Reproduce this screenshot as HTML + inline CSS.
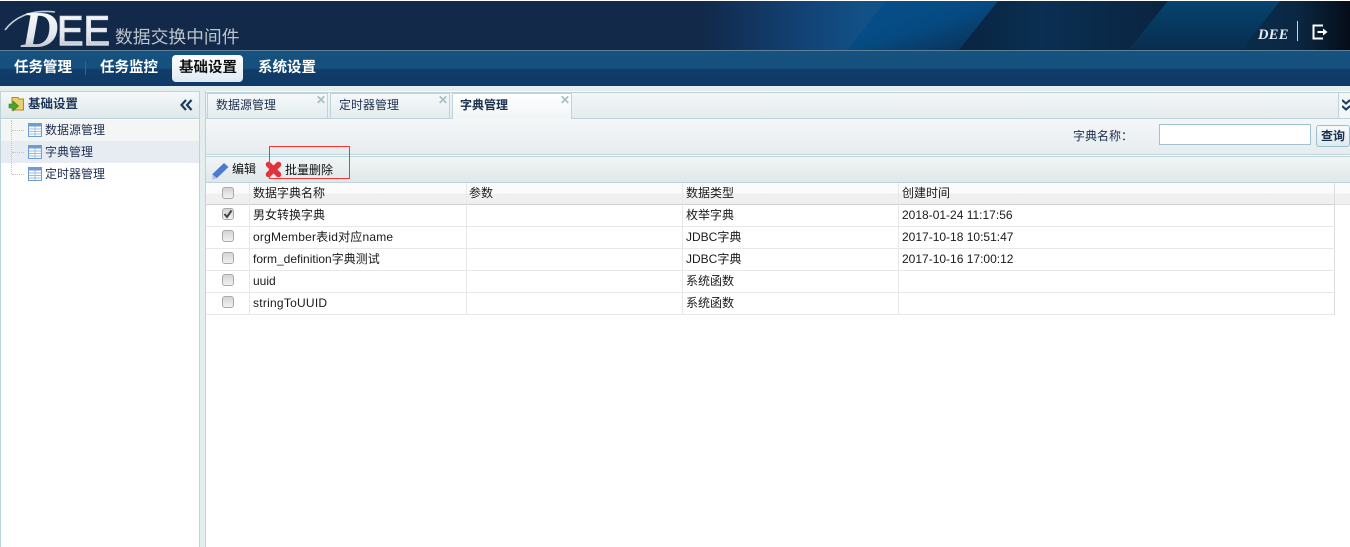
<!DOCTYPE html>
<html lang="zh-CN"><head><meta charset="utf-8"><title>DEE</title>
<style>
*{box-sizing:border-box;margin:0;padding:0}
html,body{width:1350px;height:547px;overflow:hidden;background:#fff;font-family:"Liberation Sans","Noto Sans CJK SC","WenQuanYi Zen Hei",sans-serif;font-size:12px;color:#1b2f4f}
.a{position:absolute;white-space:nowrap}
#hdr{left:0;top:0;width:1350px;height:51px;background:#12294a;overflow:hidden;border-top:1px solid #fff}
#nav{left:0;top:51px;width:1350px;height:35px;background:linear-gradient(#16527f 0,#16507e 17px,#103c69 19px,#103a67 100%);}
#navtop{left:0;top:50px;width:1350px;height:1px;background:#5d7f97}
.nv{top:59px;font-size:14.5px;font-weight:bold;color:#fff;line-height:18px}
#act{left:172px;top:55px;width:71px;height:27px;background:linear-gradient(#fff,#dfe9f3);border-radius:4px}
#bg{left:0;top:86px;width:1350px;height:461px;background:#e4eeee}
#left{left:0;top:91px;width:200px;height:456px;background:#fff;border:1px solid #bcd3d9;border-bottom:0;border-left:1px solid #bcd3d9}
#lh{left:1px;top:92px;width:198px;height:27px;background:linear-gradient(#f5f8f9,#dfe8ea);border-bottom:1px solid #bcd3d9}
.tr{left:45px;font-size:12px;line-height:16px;color:#1b2f4f}
.ic{left:28px}
#main{left:205px;top:91px;width:1145px;height:456px;background:#fff;border-left:1px solid #bcd3d9}
.tab{top:93px;height:25px;background:linear-gradient(#f6f9fa,#e4ecee);border:1px solid #bcd3d9;border-bottom:0;font-size:12px;line-height:22px;padding-left:8px}
.x{top:93px;font-size:12px;font-weight:bold;color:#a5bdc4;line-height:14px}
.hl{height:1px;background:#bcd3d9;left:206px;width:1144px}
.th{top:183px;height:22px;background:linear-gradient(#fbfbfb 0,#fbfbfb 10px,#f0f0f0 11px,#efefef 100%)}
.c{font-size:12px;color:#1a1a1a;line-height:16px}
.rl{left:206px;width:1129px;height:1px;background:#e8e8e8}
.vl{width:1px;background:#e8e8e8;top:183px;height:132px}
.cb{left:222px;width:12px;height:12px;border:1px solid #a9a9a9;border-radius:3px;background:linear-gradient(#d4d4d4,#f2f2f2)}
</style></head><body>
<div class="a" id="hdr">
<svg width="1350" height="50" style="position:absolute;left:0;top:0">
<defs>
<linearGradient id="g1" gradientUnits="userSpaceOnUse" x1="0" x2="900" y1="0" y2="0"><stop offset="0" stop-color="#12294a"/><stop offset=".78" stop-color="#12294a"/><stop offset=".9" stop-color="#124478"/><stop offset=".96" stop-color="#125186"/><stop offset="1" stop-color="#125186"/></linearGradient>
<linearGradient id="g2" x1="0" x2="1" y1="0" y2="1"><stop offset="0" stop-color="#05508e"/><stop offset=".5" stop-color="#064a82"/><stop offset="1" stop-color="#0a2d50"/></linearGradient>
<linearGradient id="g3" x1="0" x2="1" y1="0" y2="0"><stop offset="0" stop-color="#092440"/><stop offset=".4" stop-color="#0a2f52"/><stop offset="1" stop-color="#0a2440"/></linearGradient>
<linearGradient id="g4" x1="0" x2="0" y1="0" y2="1"><stop offset="0" stop-color="#06446f"/><stop offset="1" stop-color="#082c4e"/></linearGradient>
<linearGradient id="g5" x1="0" x2="1" y1="0" y2="0"><stop offset="0" stop-color="#0a2b4c"/><stop offset=".5" stop-color="#0a2844"/><stop offset="1" stop-color="#060d18"/></linearGradient>
<linearGradient id="lg" x1="0" x2="0" y1="0" y2="1"><stop offset="0" stop-color="#fff"/><stop offset=".6" stop-color="#e4e8ec"/><stop offset="1" stop-color="#9aa6b5"/></linearGradient>
</defs>
<rect width="1350" height="50" fill="url(#g1)"/>
<polygon points="886,0 999,0 959,50 846,50" fill="url(#g2)"/>
<polygon points="998,0 1168,0 1128,50 958,50" fill="url(#g3)"/>
<polygon points="1168,0 1280,0 1240,50 1128,50" fill="url(#g4)"/>
<polygon points="1280,0 1350,0 1350,50 1240,50" fill="url(#g5)"/>
<path d="M5 29C14 17 30 8 55 11" fill="none" stroke="#c5ced8" stroke-width="1.6"/>
<text x="21" y="46" font-family="Liberation Serif" font-size="52" font-weight="bold" font-style="italic" fill="url(#lg)">D</text>
<text x="57" y="44" font-family="Liberation Sans" font-size="42" fill="url(#lg)" stroke="#dfe4e9" stroke-width="1.2" textLength="53" lengthAdjust="spacingAndGlyphs">EE</text>
</svg>
<div class="a" style="left:115px;top:26px;font-size:17.8px;color:#bcc3cb;line-height:20px">数据交换中间件</div>
<div class="a" style="left:1258px;top:27px;font-family:'Liberation Serif',serif;font-style:italic;font-weight:bold;font-size:14.5px;color:#e8edf2;line-height:14px;letter-spacing:.3px">DEE</div>
<div class="a" style="left:1297px;top:20px;width:1px;height:20px;background:#c9d2da"></div>
<svg class="a" style="left:1312px;top:23px" width="17" height="16"><path d="M11 1.500H1.500V14.500H11" fill="none" stroke="#fff" stroke-width="2"/><path d="M5.500 7H11V4.500L15.500 8 11 11.500V9H5.500Z" fill="#fff"/></svg>
</div>
<div class="a" id="navtop"></div>
<div class="a" id="nav"></div>
<div class="a" id="act"></div>
<div class="a nv" style="left:14px">任务管理</div>
<div class="a" style="left:85px;top:61px;width:1px;height:14px;background:#3a6488"></div>
<div class="a nv" style="left:100px">任务监控</div>
<div class="a nv" style="left:179px;color:#111">基础设置</div>
<div class="a nv" style="left:258px">系统设置</div>
<div class="a" id="bg"></div>
<div class="a" id="left"></div>
<div class="a" id="lh"></div>
<svg class="a" style="left:8px;top:96px" width="17" height="17"><path d="M4 1.500H10L11 3H15.500V14H4Z" fill="#eccf6c" stroke="#b08a2a"/><path d="M1 8H5V5L10.500 10 5 15V12H1Z" fill="#45a82e" stroke="#2f7d1e" stroke-width=".6"/></svg>
<div class="a" style="left:28px;top:96px;font-size:12.5px;font-weight:bold;line-height:16px;color:#1f3658">基础设置</div>
<svg class="a" style="left:180px;top:99px" width="13" height="12"><path d="M6 1L1.500 6 6 11M11.500 1L7 6 11.500 11" fill="none" stroke="#1b3a5c" stroke-width="2.200"/></svg>
<div class="a" style="left:1px;top:120px;width:198px;height:21px;background:#f4f5f5"></div>
<div class="a" style="left:1px;top:141px;width:198px;height:22px;background:#e7ecf3"></div>
<div class="a" style="left:11px;top:120px;height:54px;border-left:1px dotted #c4c4c4"></div>
<div class="a" style="left:12px;top:130px;width:12px;border-top:1px dotted #c4c4c4"></div>
<div class="a" style="left:12px;top:152px;width:12px;border-top:1px dotted #c4c4c4"></div>
<div class="a" style="left:12px;top:174px;width:12px;border-top:1px dotted #c4c4c4"></div>
<svg class="a ic" style="top:123px" width="14" height="14"><rect x=".5" y=".5" width="13" height="13" fill="#fff" stroke="#6d9dd3"/><path d="M1 1H13V3.500H1Z" fill="#6d9dd3"/><path d="M1 6H13M1 8.500H13M1 11H13M7 3.500V13" stroke="#9dbde4"/></svg><div class="a tr" style="top:122px">数据源管理</div>
<svg class="a ic" style="top:145px" width="14" height="14"><rect x=".5" y=".5" width="13" height="13" fill="#fff" stroke="#6d9dd3"/><path d="M1 1H13V3.500H1Z" fill="#6d9dd3"/><path d="M1 6H13M1 8.500H13M1 11H13M7 3.500V13" stroke="#9dbde4"/></svg><div class="a tr" style="top:144px">字典管理</div>
<svg class="a ic" style="top:167px" width="14" height="14"><rect x=".5" y=".5" width="13" height="13" fill="#fff" stroke="#6d9dd3"/><path d="M1 1H13V3.500H1Z" fill="#6d9dd3"/><path d="M1 6H13M1 8.500H13M1 11H13M7 3.500V13" stroke="#9dbde4"/></svg><div class="a tr" style="top:166px">定时器管理</div>
<div class="a" id="main"></div>
<div class="a" style="left:206px;top:92px;width:1144px;height:26px;background:linear-gradient(#f3f6f7,#e5ecee);border-top:1px solid #bcd3d9"></div>
<div class="a hl" style="top:118px"></div>
<div class="a tab" style="left:207px;width:121px">数据源管理</div>
<div class="a tab" style="left:330px;width:120px">定时器管理</div>
<div class="a tab" style="left:452px;width:120px;height:26px;background:linear-gradient(#fff,#f0f5f6);font-weight:bold;z-index:2;padding-left:7px">字典管理</div>
<div class="a x" style="left:316px;z-index:3">✕</div><div class="a x" style="left:438px;z-index:3">✕</div><div class="a x" style="left:560px;z-index:3">✕</div>
<div class="a" style="left:1338px;top:93px;width:12px;height:25px;background:#f3f6f7;border-left:1px solid #bcd3d9"></div>
<svg class="a" style="left:1342px;top:99px" width="8" height="12"><path d="M0 1L4 4.500 8 1M0 7L4 10.500 8 7" fill="none" stroke="#1b3a5c" stroke-width="2"/></svg>
<div class="a" style="left:206px;top:119px;width:1144px;height:36px;background:linear-gradient(#f4f7f8,#e6ecef)"></div>
<div class="a hl" style="top:154px"></div>
<div class="a" style="left:206px;top:156px;width:1144px;height:26px;background:linear-gradient(#f2f5f6,#e0e8ea);border-top:1px solid #bcd3d9"></div>
<div class="a hl" style="top:182px"></div>
<div class="a" style="left:1073px;top:128px;line-height:16px">字典名称：</div>
<div class="a" style="left:1159px;top:124px;width:152px;height:21px;background:#fff;border:1px solid #a3c2cf"></div>
<div class="a" style="left:1316px;top:125px;width:34px;height:22px;background:linear-gradient(#f7fafb,#dfe9ec);border:1px solid #9cc0cf;border-radius:3px;font-weight:bold;line-height:20px;padding-left:4px">查询</div>
<svg class="a" style="left:212px;top:162px" width="17" height="18"><path d="M0.500 12L12 1 16.500 5 5 16 0.500 17.500Z" fill="#4a7bd0"/><path d="M0.500 12.500L0.500 17.500 5 16Z" fill="#a9c1ea"/></svg>
<div class="a" style="left:232px;top:161px;line-height:16px;color:#111">编辑</div>
<svg class="a" style="left:265px;top:161px" width="17" height="17"><path d="M3.500 3.500L13.500 13.500M13.500 3.500L3.500 13.500" stroke="#e2313a" stroke-width="5.500" stroke-linecap="round"/></svg>
<div class="a" style="left:285px;top:162px;line-height:16px;color:#111">批量删除</div>
<div class="a" style="left:269px;top:146px;width:81px;height:33px;border:1px solid #f33;z-index:5"></div>
<div class="a th" style="left:206px;width:1144px"></div>
<div class="a" style="left:206px;top:204px;width:1129px;height:1px;background:#d0d0d0"></div>
<div class="a" style="left:1335px;top:204px;width:15px;height:1px;background:#e4e4e4"></div>
<div class="a" style="left:1334px;top:183px;width:1px;height:132px;background:#dcdcdc"></div>
<div class="a rl" style="top:226px"></div><div class="a rl" style="top:248px"></div><div class="a rl" style="top:270px"></div><div class="a rl" style="top:292px"></div><div class="a rl" style="top:314px"></div>
<div class="a vl" style="left:249px"></div><div class="a vl" style="left:466px"></div><div class="a vl" style="left:682px"></div><div class="a vl" style="left:898px"></div>
<div class="a cb" style="top:187px"></div><div class="a cb" style="top:208px"></div><div class="a cb" style="top:230px"></div><div class="a cb" style="top:252px"></div><div class="a cb" style="top:274px"></div><div class="a cb" style="top:296px"></div>
<svg class="a" style="left:223px;top:209px" width="10" height="10"><path d="M1.500 5L4 8 8.500 1.500" fill="none" stroke="#444" stroke-width="2"/></svg>
<div class="a c" style="left:253px;top:185px">数据字典名称</div><div class="a c" style="left:469px;top:185px">参数</div><div class="a c" style="left:686px;top:185px">数据类型</div><div class="a c" style="left:902px;top:185px">创建时间</div>
<div class="a c" style="left:253px;top:207px">男女转换字典</div><div class="a c" style="left:686px;top:207px">枚举字典</div><div class="a c" style="left:902px;top:207px">2018-01-24 11:17:56</div>
<div class="a c" style="left:253px;top:229px;letter-spacing:.2px">orgMember表id对应name</div><div class="a c" style="left:686px;top:229px">JDBC字典</div><div class="a c" style="left:902px;top:229px">2017-10-18 10:51:47</div>
<div class="a c" style="left:253px;top:251px">form_definition字典测试</div><div class="a c" style="left:686px;top:251px">JDBC字典</div><div class="a c" style="left:902px;top:251px">2017-10-16 17:00:12</div>
<div class="a c" style="left:253px;top:273px">uuid</div><div class="a c" style="left:686px;top:273px">系统函数</div>
<div class="a c" style="left:253px;top:295px;letter-spacing:.25px">stringToUUID</div><div class="a c" style="left:686px;top:295px">系统函数</div>
</body></html>
